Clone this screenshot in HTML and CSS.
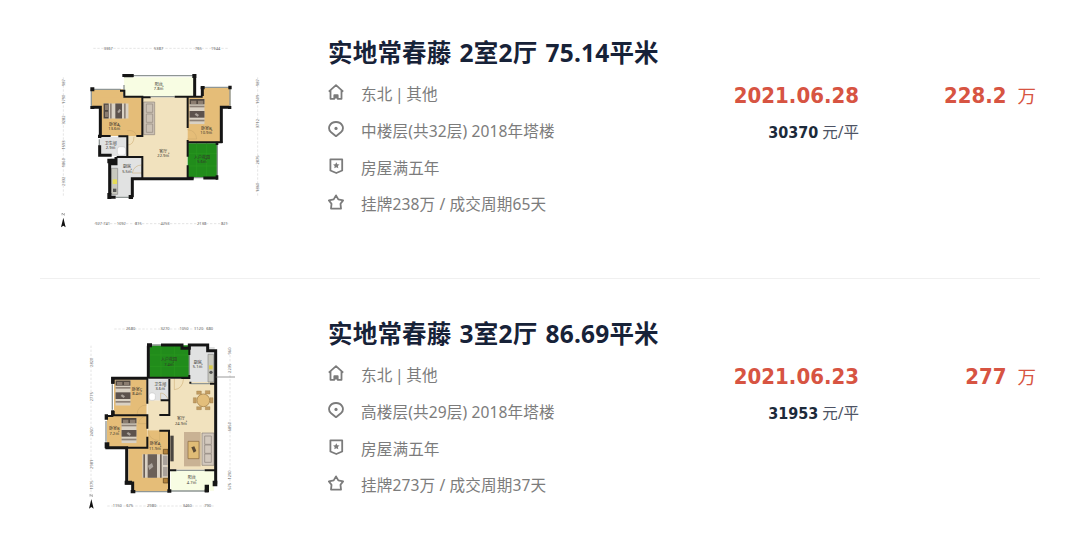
FILE: index.html
```html
<!DOCTYPE html>
<html lang="zh-CN">
  <head>
    <meta charset="UTF-8" />
    <meta name="viewport" content="width=device-width, initial-scale=1.0" />
    <title>实地常春藤 成交记录</title>
    <link rel="stylesheet" href="styles.css">
  </head>
  <body>
    <!-- shared icons and furniture -->
    <svg class="defs" width="0" height="0">
      <symbol id="icon-house" viewBox="0 0 16 16">
        <path d="M.8 7.600 8 1.200l7.200 6.400M2.500 6.400v8.400h3.800v-3.600h3.400v3.600h3.800V6.400M8 11.200v3.400" />
      </symbol>
      <symbol id="icon-pin" viewBox="0 0 16 16">
        <path d="M8 15.200 2.800 11C-1 7 2 1 8 1s9 6 5.200 10z" />
        <circle class="dot" cx="8" cy="7.400" r="1.600" />
      </symbol>
      <symbol id="icon-shield" viewBox="0 0 16 16">
        <path d="M2.400 1.300h11.800v11.200L8.300 15l-5.900-2.500z" />
        <path class="dot" d="m8.300 4.200 1 2 2.200.3-1.600 1.500.4 2.200-2-1-2 1 .4-2.200-1.600-1.500 2.200-.3z" />
      </symbol>
      <symbol id="icon-star" viewBox="0 0 16 16">
        <path d="m8 1.400 2.300 4 4.800 1-2.600 3.400.5 4.800H3l.5-4.800L.9 6.400l4.800-1z" />
      </symbol>
      <symbol id="bed" viewBox="0 0 76 46">
        <rect width="76" height="46" fill="#d9d1c4" />
        <rect width="16" height="46" fill="#514840" />
        <path d="M5 4h10v16H5zM5 25h10v16H5z" fill="#8b7d70" />
        <rect x="20" width="5" height="46" fill="#8d8177" />
        <rect x="36" width="20" height="46" fill="#5c524d" />
        <rect x="62" width="5" height="46" fill="#8d8177" />
        <path d="m42 26 6-9 5 4-6 9z" fill="#aaa29b" />
      </symbol>
      <symbol id="north" viewBox="0 0 20 50">
        <path d="M6 2v7M6 2l7 7V2" fill="none" stroke="#666" stroke-width="1.500" />
        <path d="M10 16 17 45l-7-5-7 5z" fill="#111" />
      </symbol>
    </svg>

    <ul class="list">
      <li class="item">
        <svg class="plan" viewBox="0 0 660 615">
          <g class="ruler">
            <path d="M130 55h405M40 142v358M623 142v358M132 581h403" />
          </g>
          <g class="size">
            <text x="175" y="59">3367</text>
            <text x="326" y="59">5387</text>
            <text x="445" y="59">765</text>
            <text x="497" y="59">1944</text>
            <text x="158" y="585">927 741</text>
            <text x="214" y="585">1092</text>
            <text x="265" y="585">815</text>
            <text x="345" y="585">4253</text>
            <text x="455" y="585">2138</text>
            <text x="523" y="585">821</text>
            <g transform="rotate(-90)">
              <text x="-158" y="44">987</text>
              <text x="-208" y="44">1790</text>
              <text x="-270" y="44">3282</text>
              <text x="-345" y="44">1593</text>
              <text x="-398" y="44">1860</text>
              <text x="-454" y="44">2332</text>
              <text x="-158" y="627">987</text>
              <text x="-208" y="627">1509</text>
              <text x="-281" y="627">3712</text>
              <text x="-390" y="627">2875</text>
              <text x="-472" y="627">1860</text>
            </g>
          </g>
          <!-- floors -->
          <path fill="#e5bd78" d="M126 178h94v24h56v116H152v-88h-26z" />
          <path fill="#e5bd78" d="M455 174h86v58h-26v106H412V202h43z" />
          <path fill="#f1e2be" d="M230 202h182v239H277v-62h-47z" />
          <path fill="#e5bd78" d="M152 202h124v116H152z" />
          <path fill="#f8fde3" d="M222 142h210v56H222z" />
          <path fill="#e1e2e2" d="M150 320h82v58h-82zM182 384h94v62h-32v56h-62z" />
          <path fill="#218c1b" d="M413 340h88v103h-88z" />
          <path stroke="#2b981f" stroke-width="2" d="M440 340v103M470 340v103M413 370h88M413 408h88" />
          <!-- furniture -->
          <use href="#bed" x="160" y="220" width="76" height="46" />
          <use href="#bed" x="0" y="0" width="76" height="46" transform="translate(464 207) rotate(90)" />
          <path fill="#cbc1b4" stroke="#93887d" stroke-width="2" d="M281 216h33v98h-33zM289 222h19v25h-19zM289 252h19v25h-19zM289 282h19v25h-19z" />
          <path fill="#c8c8be" stroke="#888" stroke-width="2" d="M184 415h19v78h-19z" />
          <path fill="#e5dc57" d="M188 448h13v14h-13z" />
          <path fill="#555" d="M189 476h10v10h-10z" />
          <rect x="202" y="350" width="25" height="26" rx="8" fill="#fafafa" stroke="#aaa" />
          <path class="door" d="M232 345q20 0 20-25M276 405q-24 0-29 24h29M412 327h28q-2-26-28-28M232 302q22-4 28 16" />
          <!-- walls -->
          <path class="window" d="M128 178h84M124 178v50M222 165v34M250 137h180M302 200h72M458 172h82v58M502 340v100M148 328v20M197 502h40M431 443h31M277 408v27" />
          <path class="wall outer" d="M222 137h28M434 132v66M127 232h24v86M149 346v30h36M198 381v20h-19v101h18M247 502v-56h184M537 232h-23v107M460 444h42M457 198v-26" />
          <path class="wall" d="M432 200h25M414 200h44M210 182h13v18h54v118h-18M277 235v82M150 318h32M205 319h27v59M200 381h77v27M277 406v38M413 202v92M413 330v50M413 406v37h18M413 337h104M277 202h25M374 200h40" />
          <path fill="#151515" d="M121 172h12v12h-12zM217 132h34v9h-34zM452 168h12v10h-12zM535 167h10v11h-10zM534 228h10v9h-10zM121 228h12v9h-12zM144 314h10v10h-10zM172 386h27v14h-27zM172 489h12v18h-12zM236 495h13v12h-13zM497 335h8v10h-8zM497 436h8v13h-8zM427 132h12v12h-12z" />
          <g class="room">
            <text x="326" y="167">阳台</text>
            <text x="326" y="180">7.8㎡</text>
            <text x="193" y="287">卧室A</text>
            <text x="193" y="300">13.6㎡</text>
            <text x="469" y="300">卧室B</text>
            <text x="469" y="313">10.9㎡</text>
            <text x="182" y="345">卫生间</text>
            <text x="182" y="358">2.9㎡</text>
            <text x="231" y="415">厨房</text>
            <text x="231" y="428">5.5㎡</text>
            <text x="340" y="368">客厅</text>
            <text x="340" y="382">22.9㎡</text>
            <text x="456" y="388">入户花园</text>
            <text x="456" y="400">5.6㎡</text>
          </g>
          <use href="#north" x="30" y="547" width="20" height="50" />
        </svg>
        <div class="info">
          <h2 class="title">实地常春藤 2室2厅 75.14平米</h2>
          <p class="line facing"><svg class="icon"><use href="#icon-house" /></svg>东北 | 其他</p>
          <p class="line"><svg class="icon"><use href="#icon-pin" /></svg>中楼层(共32层) 2018年塔楼</p>
          <p class="line"><svg class="icon"><use href="#icon-shield" /></svg>房屋满五年</p>
          <p class="line"><svg class="icon"><use href="#icon-star" /></svg>挂牌238万 / 成交周期65天</p>
        </div>
        <div class="deal">
          <div class="date">2021.06.28</div>
          <div class="unit"><b>30370</b> 元/平</div>
        </div>
        <div class="price"><b>228.2</b>万</div>
      </li>

      <li class="item">
        <svg class="plan" viewBox="-90 -12 660 615">
          <g class="ruler">
            <path d="M103 42h100M210 42h190M33 92v456M450 96v425M82 573h320" />
          </g>
          <g class="size">
            <text x="152" y="46">2680</text>
            <text x="255" y="46">3270</text>
            <text x="312" y="46">1050</text>
            <text x="356" y="46">1120</text>
            <text x="389" y="46">680</text>
            <text x="112" y="577">1150</text>
            <text x="149" y="577">675</text>
            <text x="215" y="577">2980</text>
            <text x="322" y="577">3460</text>
            <text x="383" y="577">790</text>
            <g transform="rotate(-90)">
              <text x="-142" y="38">2820</text>
              <text x="-245" y="38">2775</text>
              <text x="-351" y="38">2450</text>
              <text x="-448" y="38">2981</text>
              <text x="-510" y="38">1075</text>
              <text x="-108" y="454">960</text>
              <text x="-160" y="454">2235</text>
              <text x="-335" y="454">6850</text>
              <text x="-480" y="454">1290</text>
              <text x="-514" y="454">575</text>
            </g>
          </g>
          <!-- floors -->
          <path fill="#218c1b" d="M208 91h119v95H208z" />
          <path stroke="#2b981f" stroke-width="2" d="M243 91v95M283 91v95M208 120h119M208 154h119" />
          <path fill="#f1e2be" d="M202 256h64v-64h138v272H269V346h-67z" />
          <path fill="#e5bd78" d="M102 193h98v108h-98zM81 303h120v93H81zM145 396h57v-50h64v183H157v-27h-12z" />
          <path fill="#e1e2e2" d="M205 193h61v63h-61zM329 96h75v105h-75z" />
          <path fill="#f8fde3" d="M272 468h130v59H272z" />
          <!-- furniture -->
          <use href="#bed" width="76" height="46" transform="translate(152 196) rotate(90)" />
          <use href="#bed" width="76" height="46" transform="translate(170 309) rotate(90)" />
          <g transform="translate(263 488) rotate(180)">
            <rect width="76" height="70" fill="#d9d1c4" />
            <path fill="#6b6058" d="M18 0h5v70h-5zM32 0h28v70H32zM68 0h5v70h-5z" />
            <path fill="#aaa29b" d="m43 33 12-10 4 13-12 8zM0 4h14v28H0zM0 38h14v28H0z" />
          </g>
          <path fill="#b2823c" stroke="#5b421e" stroke-width="2" d="M250 403h14v14h-14zM250 490h14v14h-14z" />
          <path fill="#4a4540" d="M271 362h10v77h-10z" />
          <rect x="312" y="351" width="50" height="103" fill="#c9b294" />
          <path fill="#e0bc76" stroke="#86663c" stroke-width="2" d="M324 379h33v52h-33z" />
          <path fill="#5b4a35" d="m334 397 9-3 6 14-8 5z" />
          <path fill="#d2c8bd" stroke="#8a8078" stroke-width="2" d="M366 354h36v97h-36zM374 363h20v25h-20zM374 390h20v25h-20zM374 417h20v25h-20z" />
          <circle cx="370" cy="256" r="19" fill="#e3be7b" stroke="#b5925a" stroke-width="3" />
          <path fill="#c29c62" stroke="#94733f" stroke-width="1" d="M350 228h14v10h-14zM376 227h14v10h-14zM340 248h9v16h-9zM390 248h9v16h-9zM350 275h14v9h-14zM376 275h14v9h-14z" />
          <path fill="#c8c8be" stroke="#888" stroke-width="2" d="M384 118h17v83h-17z" />
          <path fill="#d8cb4e" d="M387 151h11v12h-11z" />
          <circle cx="393" cy="172" r="5" fill="#555" />
          <rect x="207" y="234" width="19" height="22" rx="7" fill="#fff" stroke="#aaa" />
          <path class="door" d="M283 190v34q25-2 28-34M200 270q-27 0-29 29h29M200 303q-20 2-25 23h25M205 346q0 29 34 31v-31M242 256v-22q14 0 24 22" />
          <!-- walls -->
          <path class="window" d="M215 90h28M330 90h52M97 208v76M78 318v62M157 530h110M267 528h107M289 466h85M328 120v60M332 206h58" />
          <path class="wall outer" d="M243 90h63v10h22V90h55v17h24v399M205 92v97M98 206v-16h106M98 286v15M76 398h64v106h18v26M374 528h12" />
          <path class="wall" d="M205 188h123M78 303h22M98 301h104v40M202 365v33h-62M202 190v76M242 256h26v-64M238 300h30v-42M238 347h29v119h22M328 92v28M328 180v9h-24M328 203h6M390 206h16M267 466v60M374 466h32" />
          <path fill="#151515" d="M201 85h15v12h-15zM94 186h10v20H94zM94 288h10v15H94zM74 298h10v16H74zM74 382h14v18H74zM134 497h22v12h-22zM152 525h14v10h-14zM262 523h12v10h-12zM374 509h13v22h-13zM398 497h14v17h-14z" />
          <path d="M407 186h58" stroke="#666" stroke-width="2" />
          <g class="room">
            <text x="267" y="139">入户花园</text>
            <text x="267" y="152">7.4㎡</text>
            <text x="353" y="146">厨房</text>
            <text x="353" y="159">5.1㎡</text>
            <text x="171" y="228">卧室C</text>
            <text x="171" y="241">8.4㎡</text>
            <text x="241" y="212">卫生间</text>
            <text x="241" y="226">3.6㎡</text>
            <text x="103" y="346">卧室B</text>
            <text x="103" y="359">7.2㎡</text>
            <text x="225" y="391">卧室A</text>
            <text x="225" y="405">11.9㎡</text>
            <text x="303" y="316">客厅</text>
            <text x="303" y="330">24.9㎡</text>
            <text x="335" y="493">阳台</text>
            <text x="335" y="507">4.7㎡</text>
          </g>
          <use href="#north" x="24" y="536" width="20" height="50" />
        </svg>
        <div class="info">
          <h2 class="title">实地常春藤 3室2厅 86.69平米</h2>
          <p class="line facing"><svg class="icon"><use href="#icon-house" /></svg>东北 | 其他</p>
          <p class="line"><svg class="icon"><use href="#icon-pin" /></svg>高楼层(共29层) 2018年塔楼</p>
          <p class="line"><svg class="icon"><use href="#icon-shield" /></svg>房屋满五年</p>
          <p class="line"><svg class="icon"><use href="#icon-star" /></svg>挂牌273万 / 成交周期37天</p>
        </div>
        <div class="deal">
          <div class="date">2021.06.23</div>
          <div class="unit"><b>31953</b> 元/平</div>
        </div>
        <div class="price"><b>277</b>万</div>
      </li>
    </ul>
  </body>
</html>
```
FILE: styles.css
```css
body {
  margin: 0;
  background-color: #ffffff;
  font-family: "Noto Sans", "Noto Sans CJK SC", sans-serif;
  color: #7c7c7c;
}
.defs {
  display: block;
}
.list {
  width: 1000px;
  margin: 0 auto;
  padding: 0;
  list-style: none;
}
.item {
  display: grid;
  grid-template-columns: 288px 380px 151px 177px;
  height: 248px;
  padding-top: 30px;
  border-bottom: 1px solid #f0f0f0;
}
.item + .item {
  height: 222px;
  padding-top: 32px;
  border-bottom: none;
}
.plan {
  width: 220px;
  height: 205px;
  margin-left: 10px;
}
.info {
  display: grid;
  grid-template-rows: 45px 36px 38px 37px 35px;
  align-content: start;
}
.title {
  margin: 0;
  font-size: 24.5px;
  line-height: 45px;
  font-weight: bold;
  letter-spacing: 0.2px;
  word-spacing: 1.5px;
  color: #172238;
  white-space: nowrap;
}
.line {
  display: flex;
  align-items: center;
  margin: 0;
  font-size: 15.6px;
  letter-spacing: 0.12px;
  white-space: nowrap;
}
.facing {
  word-spacing: -1.6px;
}
.icon {
  width: 16px;
  height: 16px;
  margin-right: 17px;
  margin-bottom: 3px;
  fill: none;
  stroke: #7b7b7b;
  stroke-width: 1.8;
  stroke-linejoin: round;
}
.dot {
  fill: #7b7b7b;
  stroke: none;
}
.deal,
.price {
  padding-top: 48px;
  text-align: right;
  white-space: nowrap;
}
.date,
.price {
  font-size: 22px;
  line-height: 36px;
  color: #d75442;
}
.date,
.price b,
.unit b {
  font-family: "DejaVu Sans Condensed", "DejaVu Sans", sans-serif;
  font-stretch: condensed;
  font-weight: bold;
}
.unit {
  font-size: 15.5px;
  line-height: 36px;
  color: #4d5364;
}
.unit b {
  font-size: 16px;
  color: #1c2a3a;
}
.price {
  font-size: 18.5px;
}
.price b {
  margin-right: 11px;
  font-size: 22px;
}

/* floor plans */
.ruler {
  fill: none;
  stroke: #c9c9c9;
  stroke-width: 1.5;
  stroke-dasharray: 7 5;
}
.size {
  font-size: 12px;
  fill: #666666;
  text-anchor: middle;
}
.room {
  font-size: 12px;
  fill: #33302b;
  text-anchor: middle;
}
.wall {
  fill: none;
  stroke: #151515;
  stroke-width: 6;
}
.outer {
  stroke-width: 9;
}
.window {
  fill: none;
  stroke: #8f9694;
  stroke-width: 4;
}
.door {
  fill: none;
  stroke: #c9a66a;
  stroke-width: 1.5;
}
```
